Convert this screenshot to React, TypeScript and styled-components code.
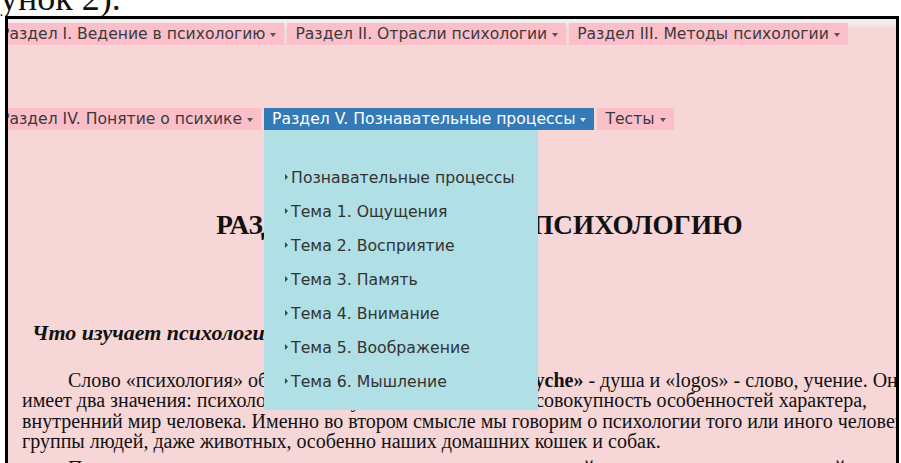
import styled, { createGlobalStyle } from "styled-components";

const GlobalStyle = createGlobalStyle`
  html, body {
    margin: 0;
    padding: 0;
    background: #fff;
    overflow: hidden;
  }
`;

const Page = styled.div`
  width: 901px;
  height: 463px;
  overflow: hidden;
  background: #fff;
`;

const Caption = styled.div`
  height: 16px;
  overflow: hidden;
  font-family: "Liberation Serif", "Times New Roman", serif;
  font-size: 36px;
  line-height: 20px;
  color: #111;
`;

const CaptionText = styled.div`
  margin-top: -12px;
  white-space: nowrap;
`;

const Frame = styled.div`
  margin-left: 5px;
  width: 888px;
  height: 460px;
  border: 3px solid #000;
  border-bottom: none;
  overflow: hidden;
  background: linear-gradient(#f3eeee 0, #f3eeee 4px, #f6d6d7 9px);
`;

const Inner = styled.div`
  margin-left: -16px;
  width: 960px;
`;

const Nav = styled.nav`
  display: flex;
  flex-direction: column;
  gap: 63px;
  padding-top: 4px;
`;

const MenuRow = styled.div`
  display: flex;
  gap: 3px;
`;

const MenuItem = styled.div<{ $active?: boolean }>`
  position: relative;
  height: 22px;
  padding: 0 8px;
  display: flex;
  align-items: center;
  gap: 5px;
  background: ${(p) => (p.$active ? "#337ab7" : "#fbbfca")};
  color: ${(p) => (p.$active ? "#fff" : "#3a3a3a")};
  font-family: "DejaVu Sans", Verdana, sans-serif;
  font-size: 15.6px;
  white-space: nowrap;
`;

const Caret = styled.span<{ $light?: boolean }>`
  width: 0;
  height: 0;
  border-left: 3px solid transparent;
  border-right: 3px solid transparent;
  border-top: 4px solid ${(p) => (p.$light ? "#d8e4f0" : "#555")};
  margin-top: 1px;
`;

const Dropdown = styled.div`
  position: absolute;
  top: 100%;
  left: 0;
  z-index: 2;
  width: 274px;
  height: 280px;
  box-sizing: border-box;
  padding: 30px 0 0 21px;
  background: #b0dfe5;
`;

const DropItem = styled.div`
  height: 34px;
  display: flex;
  align-items: center;
  gap: 3px;
  font-family: "DejaVu Sans", Verdana, sans-serif;
  font-size: 15.7px;
  color: #333;
  white-space: nowrap;
`;

const Bullet = styled.span`
  width: 0;
  height: 0;
  border-top: 3px solid transparent;
  border-bottom: 3px solid transparent;
  border-left: 3px solid #444;
`;

const Content = styled.div`
  width: 915px;
  padding-left: 30px;
  font-family: "Liberation Serif", "Times New Roman", serif;
  color: #111;
`;

const Heading = styled.h2`
  margin: 80px 0 0;
  font-size: 27.2px;
  line-height: 31px;
  font-weight: bold;
  text-align: center;
`;

const SubHeading = styled.h3`
  margin: 80px 0 0 10px;
  font-size: 22px;
  line-height: 24px;
  font-weight: bold;
  font-style: italic;
`;

const Paragraph = styled.div<{ $gap: number }>`
  margin-top: ${(p) => p.$gap}px;
  font-size: 20px;
  line-height: 20.4px;
`;

const Line = styled.div<{ $indent?: boolean }>`
  white-space: nowrap;
  padding-left: ${(p) => (p.$indent ? "46px" : "0")};
`;

const topMenu = [
  "Раздел I. Ведение в психологию",
  "Раздел II. Отрасли психологии",
  "Раздел III. Методы психологии",
];

const topics = [
  "Познавательные процессы",
  "Тема 1. Ощущения",
  "Тема 2. Восприятие",
  "Тема 3. Память",
  "Тема 4. Внимание",
  "Тема 5. Воображение",
  "Тема 6. Мышление",
];

export default function App() {
  return (
    <Page>
      <GlobalStyle />
      <Caption>
        <CaptionText>унок 2).</CaptionText>
      </Caption>
      <Frame>
        <Inner>
          <Nav>
            <MenuRow>
              {topMenu.map((t) => (
                <MenuItem key={t}>
                  {t}
                  <Caret />
                </MenuItem>
              ))}
            </MenuRow>
            <MenuRow>
              <MenuItem>
                Раздел IV. Понятие о психике
                <Caret />
              </MenuItem>
              <MenuItem $active>
                Раздел V. Познавательные процессы
                <Caret $light />
                <Dropdown>
                  {topics.map((t) => (
                    <DropItem key={t}>
                      <Bullet />
                      {t}
                    </DropItem>
                  ))}
                </Dropdown>
              </MenuItem>
              <MenuItem>
                Тесты
                <Caret />
              </MenuItem>
            </MenuRow>
          </Nav>
          <Content>
            <Heading>РАЗДЕЛ I. ВВЕДЕНИЕ В ПСИХОЛОГИЮ</Heading>
            <SubHeading>Что изучает психология?</SubHeading>
            <Paragraph $gap={25}>
              <Line $indent>
                Слово «психология» образовано от греческих слов{" "}
                <b>«psyche»</b> - душа и «logos» - слово, учение. Оно
              </Line>
              <Line>
                имеет два значения: психология как наука и психология как
                совокупность особенностей характера,
              </Line>
              <Line>
                внутренний мир человека. Именно во втором смысле мы говорим о
                психологии того или иного человека,
              </Line>
              <Line>
                группы людей, даже животных, особенно наших домашних кошек и
                собак.
              </Line>
            </Paragraph>
            <Paragraph $gap={6}>
              <Line $indent>
                Психология как наука изучает психику, которая является свойством
                высокоорганизованной материи.
              </Line>
            </Paragraph>
          </Content>
        </Inner>
      </Frame>
    </Page>
  );
}
